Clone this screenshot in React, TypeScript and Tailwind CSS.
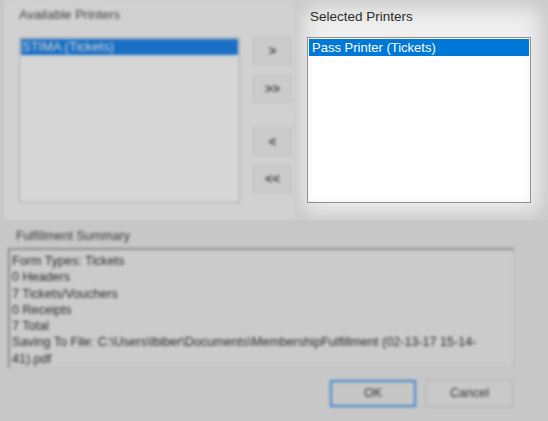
import React from 'react'

// dimmed, blurred background pieces of the printer dialog; the selected list stays sharp
const summary = [
  'Form Types: Tickets',
  '0 Headers',
  '7 Tickets/Vouchers',
  '0 Receipts',
  '7 Total',
  'Saving To File: C:\\Users\\lbiber\\Documents\\MembershipFulfillment (02-13-17 15-14-',
  '41).pdf',
]

function MoveButton({ label, className = '' }: { label: string; className?: string }) {
  return (
    <div
      className={`flex h-[28px] w-[39px] items-center justify-center border border-[#bdbdbd] bg-[#cbcbcb] text-[13px] font-bold text-[#3a3a3a] ${className}`}
    >
      {label}
    </div>
  )
}

export default function App() {
  return (
    <div className="h-[421px] w-[548px] overflow-hidden bg-[#c7c7c7] font-['Liberation_Sans',Arial,sans-serif] text-[#333]">
      <div className="flex h-[220px]">
        {/* Available printers — out of focus */}
        <div className="w-[296px] pl-[4px] blur-[1.4px]">
          <div className="flex h-full flex-col bg-[#d1d1d1] pl-[15px] pt-[7px]">
            <div className="text-[13px] leading-[16px] text-[#444]">Available Printers</div>
            <div className="mt-[14px] flex">
              <div className="h-[166px] w-[221px] border border-[#a9a9a9] bg-[#d6d6d6] p-[1px]">
                <div className="h-[16px] bg-[#1a6fc4] pl-[1px] text-[13px] leading-[16px] text-[#d6d6d6]">
                  STIMA (Tickets)
                </div>
              </div>
              <div className="ml-[13px] flex flex-col">
                <MoveButton label=">" />
                <MoveButton label=">>" className="mt-[10px]" />
                <MoveButton label="<" className="mt-[25px]" />
                <MoveButton label="<<" className="mt-[9px]" />
              </div>
            </div>
          </div>
        </div>

        {/* Selected printers — highlighted */}
        <div className="w-[252px] bg-[#efefef] pl-[11px] pt-[9px] shadow-[inset_0_0_20px_8px_rgba(200,200,200,1)]">
          <div className="pl-[3px] text-[13.5px] leading-[16px] text-[#2b2b2b]">Selected Printers</div>
          <div className="mt-[12px] h-[166px] w-[224px] border border-[#8f8f8f] bg-white p-[1px] shadow-[inset_0_0_10px_rgba(0,0,0,0.06)]">
            <div className="h-[17px] bg-[#0078d7] pl-[3px] text-[13px] leading-[17px] text-white">
              Pass Printer (Tickets)
            </div>
          </div>
        </div>
      </div>

      {/* Summary and dialog buttons — out of focus */}
      <div className="blur-[1.4px]">
        <div className="pl-[16px] pt-[9px] text-[12.5px] leading-[15px] text-[#3a3a3a]">Fulfillment Summary</div>
        <div className="ml-[8px] mt-[4px] h-[120px] w-[506px] border-l-2 border-t-2 border-[#8a8a8a] border-b border-r border-b-[#bdbdbd] border-r-[#bdbdbd] bg-[#cbcbcb] pl-[2px] pt-[3px]">
          {summary.map((line) => (
            <div key={line} className="whitespace-nowrap text-[12.6px] leading-[16.3px] text-[#2a2a2a]">
              {line}
            </div>
          ))}
        </div>
        <div className="mt-[12px] flex justify-end gap-[10px] pr-[35px]">
          <div className="flex h-[27px] w-[86px] items-center justify-center border-2 border-[#3d86cf] bg-[#c6c6c6] text-[12.5px] text-[#333]">
            OK
          </div>
          <div className="flex h-[27px] w-[87px] items-center justify-center border border-[#b3b3b3] bg-[#c9c9c9] text-[12.5px] text-[#333]">
            Cancel
          </div>
        </div>
      </div>
    </div>
  )
}
